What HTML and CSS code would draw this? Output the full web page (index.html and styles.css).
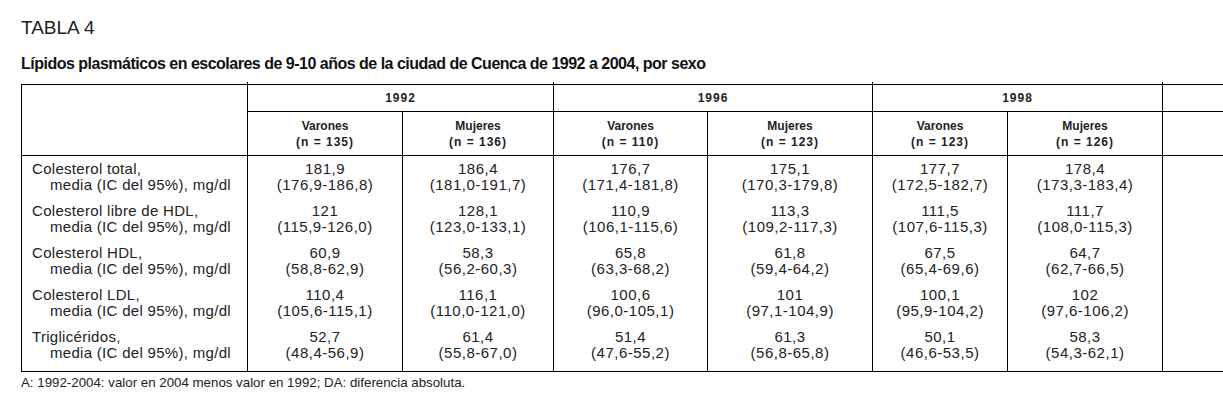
FILE: index.html
```html
<!DOCTYPE html>
<html lang="es">
<head>
<meta charset="utf-8">
<title>Tabla 4</title>
<link rel="stylesheet" href="styles.css">
</head>
<body>
<div class="page">
  <div class="label">TABLA 4</div>
  <h1 class="title">Lípidos plasmáticos en escolares de 9-10 años de la ciudad de Cuenca de 1992 a 2004, por sexo</h1>
  <table class="data">
    <colgroup>
      <col class="c-label">
      <col class="c-a"><col class="c-b">
      <col class="c-c"><col class="c-d">
      <col class="c-e"><col class="c-f">
      <col class="c-g">
    </colgroup>
    <thead>
      <tr class="years">
        <th class="blank" rowspan="2"></th>
        <th class="grp" colspan="2">1992</th>
        <th class="grp" colspan="2">1996</th>
        <th class="grp" colspan="2">1998</th>
        <th class="grp cut"></th>
      </tr>
      <tr class="sexes">
        <th>Varones<br><span class="n">(n = 135)</span></th>
        <th>Mujeres<br><span class="n">(n = 136)</span></th>
        <th>Varones<br><span class="n">(n = 110)</span></th>
        <th>Mujeres<br><span class="n">(n = 123)</span></th>
        <th>Varones<br><span class="n">(n = 123)</span></th>
        <th>Mujeres<br><span class="n">(n = 126)</span></th>
        <th class="cut"></th>
      </tr>
    </thead>
    <tbody>
      <tr>
        <td class="lbl">Colesterol total,<br><span class="ind">media (IC del 95%), mg/dl</span></td>
        <td>181,9<br>(176,9-186,8)</td>
        <td>186,4<br>(181,0-191,7)</td>
        <td>176,7<br>(171,4-181,8)</td>
        <td>175,1<br>(170,3-179,8)</td>
        <td>177,7<br>(172,5-182,7)</td>
        <td>178,4<br>(173,3-183,4)</td>
        <td class="cut"></td>
      </tr>
      <tr>
        <td class="lbl">Colesterol libre de HDL,<br><span class="ind">media (IC del 95%), mg/dl</span></td>
        <td>121<br>(115,9-126,0)</td>
        <td>128,1<br>(123,0-133,1)</td>
        <td>110,9<br>(106,1-115,6)</td>
        <td>113,3<br>(109,2-117,3)</td>
        <td>111,5<br>(107,6-115,3)</td>
        <td>111,7<br>(108,0-115,3)</td>
        <td class="cut"></td>
      </tr>
      <tr>
        <td class="lbl">Colesterol HDL,<br><span class="ind">media (IC del 95%), mg/dl</span></td>
        <td>60,9<br>(58,8-62,9)</td>
        <td>58,3<br>(56,2-60,3)</td>
        <td>65,8<br>(63,3-68,2)</td>
        <td>61,8<br>(59,4-64,2)</td>
        <td>67,5<br>(65,4-69,6)</td>
        <td>64,7<br>(62,7-66,5)</td>
        <td class="cut"></td>
      </tr>
      <tr>
        <td class="lbl">Colesterol LDL,<br><span class="ind">media (IC del 95%), mg/dl</span></td>
        <td>110,4<br>(105,6-115,1)</td>
        <td>116,1<br>(110,0-121,0)</td>
        <td>100,6<br>(96,0-105,1)</td>
        <td>101<br>(97,1-104,9)</td>
        <td>100,1<br>(95,9-104,2)</td>
        <td>102<br>(97,6-106,2)</td>
        <td class="cut"></td>
      </tr>
      <tr class="last">
        <td class="lbl">Triglicéridos,<br><span class="ind">media (IC del 95%), mg/dl</span></td>
        <td>52,7<br>(48,4-56,9)</td>
        <td>61,4<br>(55,8-67,0)</td>
        <td>51,4<br>(47,6-55,2)</td>
        <td>61,3<br>(56,8-65,8)</td>
        <td>50,1<br>(46,6-53,5)</td>
        <td>58,3<br>(54,3-62,1)</td>
        <td class="cut"></td>
      </tr>
    </tbody>
  </table>
  <p class="note">A: 1992-2004: valor en 2004 menos valor en 1992; DA: diferencia absoluta.</p>
</div>
</body>
</html>
```

FILE: styles.css
```css
html, body {
  margin: 0;
  padding: 0;
  background: #fff;
  overflow: hidden;
}

body {
  font-family: "Liberation Sans", Arial, sans-serif;
  color: #111;
}

.page {
  padding: 17px 0 0 21px;
  width: 1400px;
}

.label {
  font-size: 19px;
  line-height: 22px;
  font-weight: 400;
  color: #222;
}

.title {
  margin: 15px 0 0;
  font-size: 16px;
  line-height: 20px;
  font-weight: 700;
  letter-spacing: -0.5px;
  color: #111;
}

.data {
  margin-top: 10px;
  border-collapse: collapse;
  table-layout: fixed;
  width: 1291px;
}

.c-label { width: 226px; }
.c-a { width: 155px; }
.c-b { width: 151px; }
.c-c { width: 154px; }
.c-d { width: 165px; }
.c-e { width: 135px; }
.c-f { width: 155px; }
.c-g { width: 150px; }

.data th,
.data td {
  padding: 0;
  border: 0;
  text-align: center;
  vertical-align: top;
}

.data thead tr.years th {
  border-top: 1px solid #000;
  border-bottom: 1px solid #000;
  border-left: 1px solid #000;
  height: 26px;
  vertical-align: middle;
  font-size: 12px;
  font-weight: 700;
  letter-spacing: 1px;
  color: #222;
}

.data thead tr.years th.grp {
  position: relative;
}

.data thead tr.years th.grp::before {
  content: "";
  position: absolute;
  left: -1px;
  top: -3px;
  height: 3px;
  border-left: 1px solid #000;
}

.data thead tr.sexes th {
  border-left: 1px solid #000;
  border-bottom: 1px solid #000;
  height: 43px;
  vertical-align: middle;
  font-size: 12px;
  line-height: 16px;
  font-weight: 700;
  color: #222;
}

.data .n {
  letter-spacing: 1px;
}

.data tbody td {
  border-left: 1px solid #000;
  font-size: 15px;
  line-height: 16px;
  padding: 5px 0 5px;
  height: 32px;
  letter-spacing: 0.5px;
  color: #222;
}

.data tbody td.lbl {
  text-align: left;
  padding-left: 10px;
  letter-spacing: 0.3px;
}

.data .ind {
  padding-left: 18px;
}

.data tbody tr.last td {
  padding-bottom: 10px;
  border-bottom: 1px solid #000;
}

.note {
  margin: 3px 0 0;
  font-size: 13.3px;
  line-height: 16px;
  color: #222;
}
```
